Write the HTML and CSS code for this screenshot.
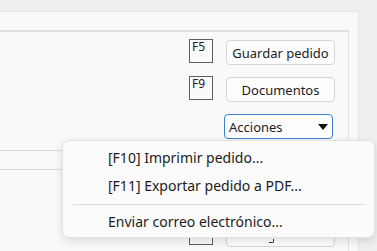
FILE: index.html
```html
<!DOCTYPE html>
<html lang="es">
  <head>
    <meta charset="UTF-8" />
    <meta name="viewport" content="width=device-width, initial-scale=1.0" />
    <title>Pedido</title>
    <link rel="stylesheet" href="styles.css">
  </head>
  <body>
    <div class="top-strip"></div>
    <div class="panel">
      <div class="inner-box">
        <div class="grid-area">
          <div class="grid-header"></div>
        </div>

        <div class="actions">
          <div class="action-row">
            <span class="key-box">F5</span>
            <button class="btn">Guardar pedido</button>
          </div>
          <div class="action-row">
            <span class="key-box">F9</span>
            <button class="btn">Documentos</button>
          </div>
          <div class="action-row">
            <span class="key-spacer"></span>
            <div class="select">
              <span>Acciones</span>
              <span class="arrow"></span>
            </div>
          </div>
          <!-- fila tapada por el menu -->
          <div class="action-row last-row">
            <span class="key-box"></span>
            <button class="btn"><span class="descender"></span></button>
          </div>
        </div>
      </div>
    </div>

    <!-- Menu desplegable de acciones -->
    <div class="menu">
      <div class="menu-item">[F10] Imprimir pedido...</div>
      <div class="menu-item">[F11] Exportar pedido a PDF...</div>
      <div class="menu-sep"></div>
      <div class="menu-item">Enviar correo electrónico...</div>
    </div>
  </body>
</html>
```

FILE: styles.css
```css
body {
  margin: 0;
  padding: 0;
  background: #efefef;
  font-family: "Noto Sans", "Open Sans", sans-serif;
  color: #1c1c1c;
  width: 377px;
  height: 251px;
  overflow: hidden;
}

.top-strip {
  height: 11px;
}

.panel {
  margin-right: 18px;
  height: 240px;
  background: #f9f9f9;
  border-top: 1px solid #e6e6e6;
  border-right: 1px solid #e6e6e6;
  box-sizing: border-box;
  padding-top: 18px;
}

.inner-box {
  margin-right: 9px;
  height: 230px;
  border-top: 2px solid #e0e0e0;
  border-right: 1px solid #e0e0e0;
  box-sizing: border-box;
  display: flex;
  justify-content: space-between;
}

.grid-area {
  width: 180px;
  padding-top: 118px;
}

.grid-header {
  height: 18px;
  border-top: 1px solid #dadada;
  border-bottom: 1px solid #dadada;
}

.actions {
  display: flex;
  flex-direction: column;
  gap: 11px;
  padding: 7px 13px 0 0;
}

.action-row {
  display: flex;
  align-items: flex-start;
  gap: 13px;
}

.last-row {
  margin-top: 71px;
}

.key-box {
  width: 20px;
  height: 22px;
  border: 1px solid #5e5e5e;
  background: #fafafa;
  font-size: 12px;
  line-height: 13px;
  padding-left: 2px;
  color: #222;
  box-sizing: content-box;
}

.key-spacer {
  width: 22px;
}

.btn {
  position: relative;
  width: 109px;
  height: 25px;
  margin-top: 1px;
  padding: 0;
  background: #fdfdfd;
  border: 1px solid #d6d6d6;
  border-radius: 4px;
  font-family: "Noto Sans", "Open Sans", sans-serif;
  font-size: 13px;
  color: #1c1c1c;
}

.descender {
  position: absolute;
  left: 42px;
  top: 16px;
  width: 4px;
  height: 3px;
  border-bottom: 1px solid #333;
  border-right: 1px solid #333;
  border-radius: 0 0 2px 0;
}

.select {
  width: 109px;
  height: 25px;
  margin-top: 1px;
  box-sizing: border-box;
  border: 1px solid #3b7fd0;
  border-radius: 4px;
  background: #fdfdfd;
  display: flex;
  align-items: center;
  justify-content: space-between;
  padding: 0 4px 0 4px;
  font-size: 13px;
}

.arrow {
  width: 0;
  height: 0;
  border-left: 5px solid transparent;
  border-right: 5px solid transparent;
  border-top: 6px solid #111;
}

.menu {
  position: absolute;
  left: 62px;
  top: 140px;
  width: 313px;
  height: 98px;
  box-sizing: border-box;
  padding: 3px 0;
  background: #fbfbfb;
  border: 1px solid #e2e2e2;
  border-radius: 7px;
  box-shadow: 0 3px 8px rgba(0, 0, 0, 0.12);
}

.menu-item {
  height: 28px;
  line-height: 28px;
  padding-left: 45px;
  font-size: 14px;
  color: #1c1c1c;
}

.menu-sep {
  height: 1px;
  background: #dcdcdc;
  margin: 4px 9px 3px 10px;
}
```
